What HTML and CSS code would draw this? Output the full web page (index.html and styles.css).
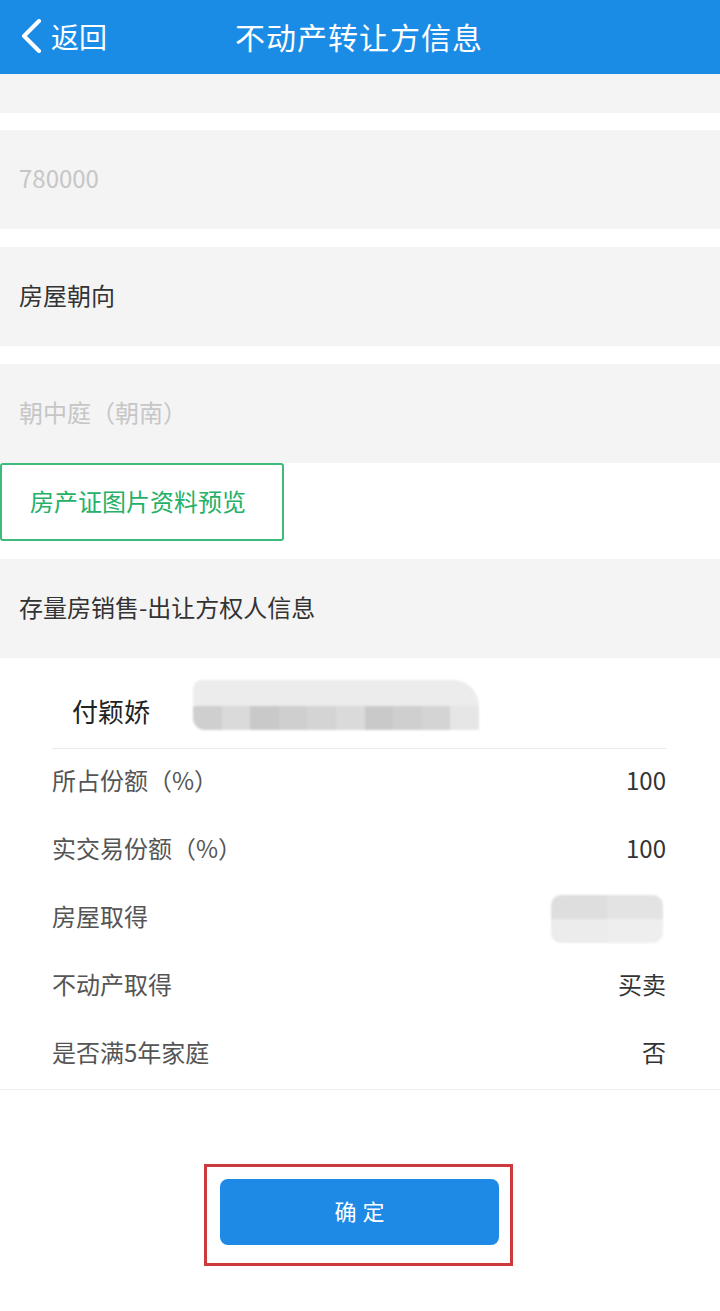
FILE: index.html
```html
<!DOCTYPE html>
<html lang="zh-CN">
<head>
<meta charset="utf-8">
<title>不动产转让方信息</title>
<link rel="stylesheet" href="styles.css">
</head>
<body>
<header class="topbar">
  <div class="back">
    <svg class="chev" width="26" height="34" viewBox="0 0 26 34"><polyline points="20,2 5,17 20,32" fill="none" stroke="#fff" stroke-width="4" stroke-linecap="round" stroke-linejoin="round"/></svg>
    <span>返回</span>
  </div>
  <div class="title">不动产转让方信息</div>
</header>

<main class="content">
  <div class="strip"></div>
  <div class="field muted">780000</div>
  <div class="field">房屋朝向</div>
  <div class="field muted">朝中庭（朝南）</div>
  <div class="preview-row"><div class="preview-btn">房产证图片资料预览</div></div>
  <div class="field section">存量房销售-出让方权人信息</div>

  <section class="card">
    <div class="name-row">
      <span class="name">付颖娇</span>
      <div class="blur-id">
        <div class="blur-top"></div>
        <div class="blur-cells">
          <i class="c1"></i><i class="c2"></i><i class="c3"></i><i class="c1"></i><i class="c4"></i><i class="c2"></i><i class="c3"></i><i class="c1"></i><i class="c4"></i><i class="c5"></i>
        </div>
      </div>
    </div>
    <div class="row"><span class="label">所占份额（%）</span><span class="value">100</span></div>
    <div class="row"><span class="label">实交易份额（%）</span><span class="value">100</span></div>
    <div class="row"><span class="label">房屋取得</span><span class="value"><span class="blur-val"><i></i><i></i><i></i><i></i></span></span></div>
    <div class="row"><span class="label">不动产取得</span><span class="value">买卖</span></div>
    <div class="row"><span class="label">是否满5年家庭</span><span class="value">否</span></div>
  </section>

  <div class="actions">
    <div class="highlight">
      <button class="confirm">确定</button>
    </div>
  </div>
</main>
</body>
</html>
```

FILE: styles.css
```css
* { box-sizing: border-box; }
html, body { margin: 0; padding: 0; }
body {
  width: 720px;
  background: #fff;
  font-family: "Noto Sans CJK SC", "Noto Sans", sans-serif;
  color: #333;
}

.topbar {
  height: 74px;
  background: #1b8ce6;
  color: #fff;
  display: flex;
  align-items: center;
  padding-bottom: 2px;
}
.back {
  display: flex;
  align-items: center;
  padding-left: 19px;
  gap: 6px;
  font-size: 28px;
  line-height: 1;
}
.chev { display: block; }
.title {
  margin-left: 128px;
  font-size: 30px;
  letter-spacing: 1px;
  line-height: 1;
}

.content { display: flex; flex-direction: column; }

.strip {
  height: 39px;
  background: #f4f4f4;
  margin-bottom: 17px;
}
.field {
  height: 99px;
  background: #f4f4f4;
  display: flex;
  align-items: center;
  padding-left: 19px;
  padding-bottom: 5px;
  font-size: 24px;
  color: #333;
  margin-bottom: 18px;
}
.field.muted { color: #c6c6c6; margin-bottom: 0; }
.content > .field.muted:nth-child(2) { margin-bottom: 18px; }
.field.section { margin-bottom: 0; padding-bottom: 4px; }

.preview-row {
  height: 78px;
  margin-bottom: 18px;
  display: flex;
}
.preview-btn {
  width: 284px;
  height: 78px;
  border: 2px solid #3dbb7a;
  border-radius: 3px;
  display: flex;
  align-items: center;
  padding-left: 28px;
  padding-bottom: 4px;
  font-size: 24px;
  color: #25b067;
}

.card {
  padding: 0 54px 0 52px;
  border-bottom: 1px solid #eeeeee;
}
.name-row {
  height: 91px;
  border-bottom: 1px solid #e9e9e9;
  display: flex;
  align-items: flex-start;
  padding-top: 22px;
}
.name {
  margin-left: 20px;
  margin-top: 16px;
  font-size: 26px;
  line-height: 30px;
  color: #222;
}
.blur-id {
  margin-left: 43px;
  width: 286px;
  height: 52px;
  display: flex;
  flex-direction: column;
  filter: blur(1px);
}
.blur-top {
  height: 26px;
  background: #ececec;
  border-radius: 30px 90px 0 12px;
  width: 100%;
}
.blur-cells {
  height: 24px;
  display: flex;
}
.blur-cells i {
  flex: 1;
  display: block;
}
.c1 { background: #cfcfcf; }
.c2 { background: #dadada; }
.c3 { background: #c9c9c9; }
.c4 { background: #d4d4d4; }
.c5 { background: #e6e6e6; }
.blur-cells i:first-child { border-radius: 0 0 0 12px; }

.row {
  height: 68px;
  display: flex;
  align-items: center;
  justify-content: space-between;
  padding-bottom: 7px;
  font-size: 24px;
}
.label { color: #555; }
.value { color: #333; display: flex; }

.blur-val {
  width: 112px;
  height: 48px;
  border-radius: 10px;
  overflow: hidden;
  display: grid;
  grid-template-columns: 1fr 1fr;
  filter: blur(1px);
  margin-right: 3px;
  margin-top: 7px;
}
.blur-val i { display: block; }
.blur-val i:nth-child(1) { background: #dedede; }
.blur-val i:nth-child(2) { background: #e3e3e3; }
.blur-val i:nth-child(3) { background: #ececec; }
.blur-val i:nth-child(4) { background: #eeeeee; }

.actions {
  padding: 74px 0 40px 204px;
  display: flex;
}
.highlight {
  border: 3px solid #cc3a3d;
  padding: 12px 11px 18px 13px;
}
.confirm {
  width: 279px;
  height: 66px;
  border: none;
  border-radius: 8px;
  background: #1e8ae6;
  color: #fff;
  font-family: "Noto Sans CJK SC", "Noto Sans", sans-serif;
  font-size: 22px;
  letter-spacing: 6px;
  padding: 0 0 4px 6px;
  display: block;
}
```
